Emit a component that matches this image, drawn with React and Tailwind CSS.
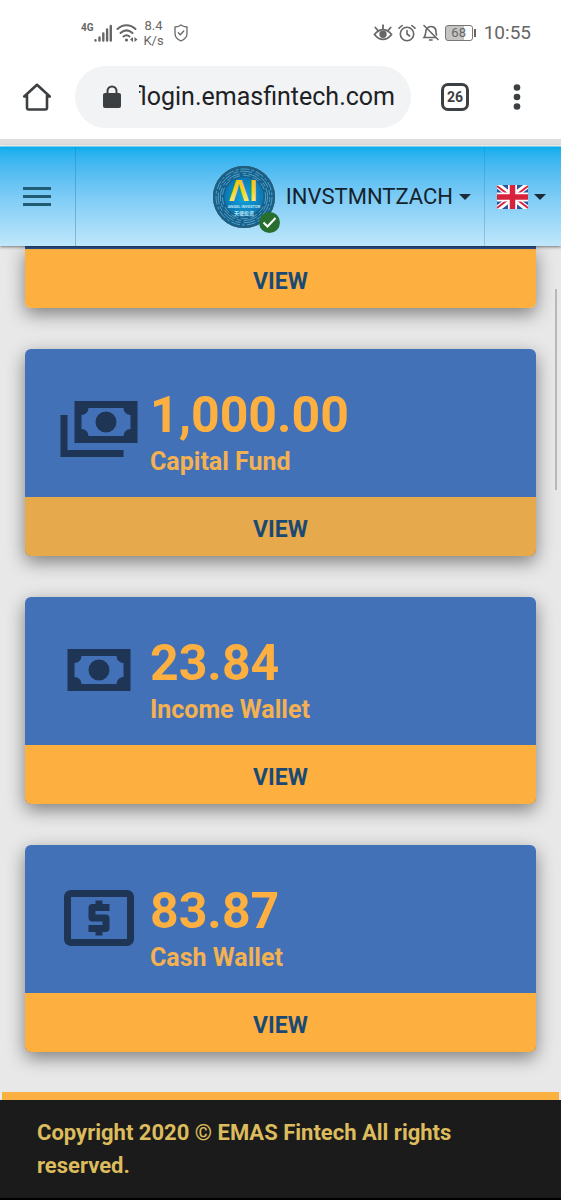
import React from 'react';

const CASH_MULTIPLE = 'M5,6H23V18H5V6M14,9A3,3 0 0,1 17,12A3,3 0 0,1 14,15A3,3 0 0,1 11,12A3,3 0 0,1 14,9M9,8A2,2 0 0,1 7,10V14A2,2 0 0,1 9,16H19A2,2 0 0,1 21,14V10A2,2 0 0,1 19,8H9M1,10H3V20H19V22H1V10Z';
const CASH = 'M3,6H21V18H3V6M12,9A3,3 0 0,1 15,12A3,3 0 0,1 12,15A3,3 0 0,1 9,12A3,3 0 0,1 12,9M7,8A2,2 0 0,1 5,10V14A2,2 0 0,1 7,16H17A2,2 0 0,1 19,14V10A2,2 0 0,1 17,8H7Z';
const LOCAL_ATM = 'M11 17h2v-1h1c.55 0 1-.45 1-1v-3c0-.55-.45-1-1-1h-3v-1h4V8h-2V7h-2v1h-1c-.55 0-1 .45-1 1v3c0 .55.45 1 1 1h3v1H9v2h2v1zm9-13H4c-1.11 0-1.99.89-1.99 2L2 18c0 1.11.89 2 2 2h16c1.11 0 2-.89 2-2V6c0-1.11-.89-2-2-2zm0 14H4V6h16v12z';

const wallets = [
  { id: 'capital', amount: '1,000.00', label: 'Capital Fund', icon: CASH_MULTIPLE, pressed: true },
  { id: 'income', amount: '23.84', label: 'Income Wallet', icon: CASH },
  { id: 'cash', amount: '83.87', label: 'Cash Wallet', icon: LOCAL_ATM },
];

const StatusBar = () => (
  <div className="flex items-center justify-between h-[66px] pl-[81px] pr-[30px] text-[#666]">
    <div className="flex items-center">
      <span className="mt-1 text-[10px] leading-3 font-bold self-start">4G</span>
      <svg className="w-[18px] h-[18px]" viewBox="0 0 18 18" fill="none" stroke="currentColor" strokeWidth="2.4" strokeLinecap="round">
        <path d="M1.5 16.2v.3M5.5 13.5v3M9.3 9.5v7M13.1 5.5v11M16.8 2v14.5" />
      </svg>
      <svg className="w-[22px] h-5 ml-1" viewBox="0 0 22 20" fill="none" stroke="currentColor" strokeWidth="2" strokeLinecap="round">
        <path d="M1.500 6c5.500-5 12.500-5 18 0M4.500 10c4-3.500 8-3.500 12 0M7.500 13.500c2-1.700 4-1.700 6 0" />
        <circle cx="10.500" cy="17" r="1.600" fill="currentColor" stroke="none" />
        <path d="M17 14v5l-3-2.500zM18.500 14v5l3-2.500z" fill="currentColor" stroke="none" />
      </svg>
      <div className="flex flex-col items-center w-6 ml-1 text-[13px] leading-[15px]">
        <span>8.4</span>
        <span>K/s</span>
      </div>
      <svg className="w-[14px] h-[18px] ml-2" viewBox="0 0 14 18" fill="none" stroke="currentColor" strokeWidth="1.300" strokeLinecap="round" strokeLinejoin="round">
        <path d="M7 1c2 1.500 4 2 6 2v6.500c0 3.500-2.500 6-6 7.500-3.500-1.500-6-4-6-7.500V3c2 0 4-.5 6-2zM4.300 8.800l2 2L9.800 7" />
      </svg>
    </div>

    <div className="flex items-center gap-1">
      <svg className="w-5 h-[18px]" viewBox="0 0 20 18" fill="none" stroke="currentColor" strokeWidth="1.800" strokeLinecap="round">
        <path d="M1.500 10.500c5-6.500 12-6.500 17 0-5 6.500-12 6.500-17 0zM10 4.800V1.200M4.500 6L2.300 3.500M15.500 6l2.200-2.500" />
        <circle cx="10" cy="10.300" r="2.800" fill="currentColor" />
      </svg>
      <svg className="w-5 h-[18px]" viewBox="0 0 20 18" fill="none" stroke="currentColor" strokeWidth="1.600" strokeLinecap="round">
        <circle cx="10" cy="10" r="6.700" />
        <path d="M10 6.500V10l2.600 2M2 4.200L5.200 1.500M18 4.200l-3.200-2.700" />
      </svg>
      <svg className="w-5 h-[18px]" viewBox="0 0 20 18" fill="none" stroke="currentColor" strokeWidth="1.600" strokeLinecap="round">
        <path d="M3 1.500l14 14M5.200 5.500C4.500 8.500 5 11 3 13.500h11M7 3.500c4-2.500 8 0 8 4 0 1.200.1 2.400.5 3.500M8.500 16h2.600" />
      </svg>
      <div className="flex items-center">
        <span className="w-7 h-4 rounded-[3px] border border-[#777] bg-[linear-gradient(90deg,#c4c4c4_68%,#fff_68%)] text-center text-[13px] leading-[14px]">68</span>
        <span className="w-[2px] h-2 ml-px bg-[#666]" />
      </div>
      <span className="ml-1 text-[19px] leading-6">10:55</span>
    </div>
  </div>
);

const BrowserBar = () => (
  <div className="flex items-center h-[62px] pl-[23px] pr-10 text-[#3c4043]">
    <button type="button" aria-label="Home" className="shrink-0">
      <svg className="w-7 h-7" viewBox="0 0 28 28" fill="none" stroke="currentColor" strokeWidth="2.600" strokeLinejoin="round">
        <path d="M4 13.500H1.200L14 1.800l12.800 11.700H24M4 12v13a1.500 1.500 0 0 0 1.500 1.500h17A1.500 1.500 0 0 0 24 25V12" />
      </svg>
    </button>
    <div className="flex flex-1 min-w-0 items-center h-[62px] ml-6 pl-[28px] pr-4 rounded-full bg-[#f1f3f4]">
      <svg className="w-[18px] h-6 shrink-0" viewBox="0 0 18 24">
        <rect x="0" y="8" width="18" height="15" rx="2" fill="currentColor" />
        <path d="M4.500 9V6a4.500 4.500 0 0 1 9 0v3" fill="none" stroke="currentColor" strokeWidth="2" />
      </svg>
      <div className="flex flex-1 justify-end overflow-hidden ml-[18px]">
        <input
          type="text"
          aria-label="Address"
          readOnly
          defaultValue="flogin.emasfintech.com"
          className="w-80 shrink-0 bg-transparent text-right text-[25px] leading-8 text-[#202124] outline-none"
        />
      </div>
    </div>
    <button type="button" aria-label="Tabs" className="w-7 h-7 ml-[30px] shrink-0 rounded-[7px] border-3 border-[#3c4043] text-[14px] leading-5 font-bold">
      26
    </button>
    <button type="button" aria-label="More" className="ml-11 shrink-0">
      <svg className="w-2 h-7" viewBox="0 0 8 28" fill="currentColor">
        <circle cx="4" cy="4.500" r="3.300" />
        <circle cx="4" cy="14" r="3.300" />
        <circle cx="4" cy="23.500" r="3.300" />
      </svg>
    </button>
  </div>
);

const Logo = () => (
  <svg className="w-16 h-16" viewBox="0 0 64 64">
    <defs>
      <radialGradient id="disc">
        <stop offset="0" stopColor="#12a5de" />
        <stop offset="1" stopColor="#0b78b4" />
      </radialGradient>
      <linearGradient id="gold" x1="0" y1="0" x2="0" y2="1">
        <stop offset="0" stopColor="#f8b818" />
        <stop offset=".5" stopColor="#f7d51f" />
        <stop offset="1" stopColor="#fff3a0" />
      </linearGradient>
    </defs>
    <circle cx="32" cy="32" r="31" fill="#14618f" />
    <circle cx="32" cy="32" r="30.300" fill="none" stroke="#285d78" strokeWidth="1.500" />
    <g fill="none" stroke="#67aecb" strokeWidth=".8">
      <circle cx="32" cy="32" r="28" strokeDasharray="9 2 3 2" />
      <circle cx="32" cy="32" r="25.800" strokeDasharray="5 2 12 3" />
      <circle cx="32" cy="32" r="23.600" strokeDasharray="14 3 4 2" />
      <circle cx="32" cy="32" r="21.600" strokeDasharray="7 3" />
    </g>
    <circle cx="32" cy="32" r="19.500" fill="url(#disc)" />
    <g textAnchor="middle" className="font-['Roboto','Noto_Sans_CJK_SC',sans-serif]">
      <text x="31" y="36" fontSize="28" fontWeight="700" fill="url(#gold)" className="font-['Inter',sans-serif]">ΛI</text>
      <text x="32" y="43" fontSize="4" fontWeight="700" fill="#bde6f5">ANGEL INVESTOR</text>
      <text x="32" y="50" fontSize="5" fontWeight="700" fill="#bde6f5">天使投资</text>
    </g>
  </svg>
);

const Flag = () => (
  <svg className="w-[31px] h-6" viewBox="0 0 31 24">
    <rect width="31" height="24" fill="#2a569c" />
    <path d="M0 0l31 24M31 0L0 24" stroke="#fff" strokeWidth="6" />
    <path d="M0 1l13 10M31 1L18 11M0 23l13-10M31 23L18 13" stroke="#d8213b" strokeWidth="1.800" />
    <path d="M15.500 0v24M0 12h31" stroke="#fff" strokeWidth="9" />
    <path d="M15.500 0v24M0 12h31" stroke="#d8213b" strokeWidth="5.500" />
  </svg>
);

const Caret = () => (
  <svg className="w-3 h-[6px] shrink-0" viewBox="0 0 12 6" fill="#1d2b36">
    <path d="M0 0h12L6 6z" />
  </svg>
);

const Header = () => (
  <header className="relative z-10 flex h-[100px] border-t border-[#79c9e8] bg-linear-to-b from-[#06aeee] to-[#bfe7fb] shadow-[0_1px_3px_rgba(0,0,0,0.5)]">
    <button type="button" aria-label="Menu" className="flex items-center justify-center w-[76px] shrink-0 pr-[2px] border-r border-[#2c7e9c]/40">
      <svg className="w-7 h-5" viewBox="0 0 28 20" fill="#205c74">
        <path d="M0 0h28v3H0zM0 8h28v3H0zM0 16h28v3H0z" />
      </svg>
    </button>
    <button type="button" className="flex flex-1 items-center justify-end pr-[13px]">
      <span className="relative">
        <Logo />
        <svg className="absolute -right-1 -bottom-1 w-[21px] h-[21px]" viewBox="0 0 21 21">
          <circle cx="10.500" cy="10.500" r="10.500" fill="#286f2f" />
          <path d="M4.500 10.500l4 4 8-8.500" fill="none" stroke="#fff" strokeWidth="2" />
        </svg>
      </span>
      <span className="ml-[10px] text-[22px] leading-8 text-[#14222c]">INVSTMNTZACH</span>
      <span className="ml-[6px]"><Caret /></span>
    </button>
    <button type="button" aria-label="Language" className="flex items-center gap-[6px] w-[77px] shrink-0 pl-3 border-l border-[#2c7e9c]/30">
      <Flag />
      <Caret />
    </button>
  </header>
);

const WalletCard = ({ wallet }) => (
  <section className="overflow-hidden rounded-md bg-[#4371b8] shadow-[0_6px_18px_rgba(0,0,0,0.45)]">
    <div className="flex h-[148px] pl-8 pt-[31px]">
      <svg className="w-[84px] h-[84px] shrink-0" viewBox="0 0 24 24" fill="#1e3556">
        <path d={wallet.icon} />
      </svg>
      <div className="ml-[9px] pt-1 font-bold text-[#fdb040]">
        <div className="text-[50px] leading-[62px]">{wallet.amount}</div>
        <h2 className="text-[25px] leading-8 text-[#f3b152]">{wallet.label}</h2>
      </div>
    </div>
    <ViewLink pressed={wallet.pressed} />
  </section>
);

const ViewLink = ({ pressed }) => (
  <a
    href="#"
    className={`flex items-center justify-center h-[59px] pt-[6px] text-[23px] leading-8 font-bold text-[#1a4a74] ${pressed ? 'bg-[#e6a94c]' : 'bg-[#fdb040]'}`}
  >
    VIEW
  </a>
);

const App = () => {
  return (
    <div className="relative flex flex-col min-h-screen bg-[#e8e8e8] font-['Roboto',sans-serif]">
      <div className="bg-white pb-[11px]">
        <StatusBar />
        <BrowserBar />
      </div>
      <div className="h-[7px] bg-[#dcdddc] border-b border-white" />
      <Header />

      <main className="flex flex-col flex-1 gap-[41px] px-[25px] pb-10">
        <section className="overflow-hidden rounded-b-md border-t-3 border-[#2f528f] shadow-[0_6px_18px_rgba(0,0,0,0.45)]">
          <ViewLink />
        </section>
        {wallets.map((wallet) => (
          <WalletCard key={wallet.id} wallet={wallet} />
        ))}
      </main>

      <div className="h-2 mx-[2px] bg-[#fbb042]" />
      <footer className="h-[100px] px-[37px] pt-4 border-b-2 border-black bg-[#1b1b1b] text-[22px] leading-[33px] font-bold text-[#dcbc5c]">
        Copyright 2020 © EMAS Fintech All rights reserved.
      </footer>

      {/* scroll thumb */}
      <div className="absolute right-1 top-[289px] w-[2px] h-[201px] bg-[#b8b8b8]" />
    </div>
  );
};

export default App;
